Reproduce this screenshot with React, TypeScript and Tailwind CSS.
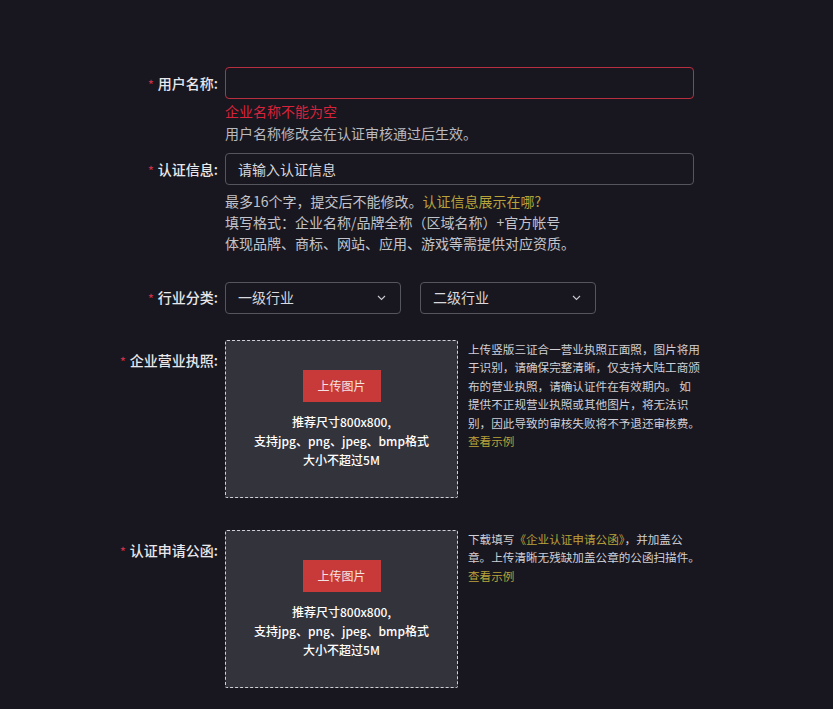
import React from "react";

const font = { fontFamily: '"Noto Sans CJK SC", "Noto Sans", sans-serif' };

function Label({ text, className = "" }: { text: string; className?: string }) {
  return (
    <div className={`w-[218px] shrink-0 text-right text-[14px] font-medium text-[#e8e8ec] ${className}`}>
      <span className="mr-[4px] text-[12px] text-[#c8304a]">*</span>
      {text}:
    </div>
  );
}

function Chevron() {
  return (
    <svg width="9" height="6" viewBox="0 0 9 6" fill="none" className="text-[#c9c9d0]">
      <path d="M1 1l3.5 3.5L8 1" stroke="currentColor" strokeWidth="1.1" />
    </svg>
  );
}

function Select({ text }: { text: string }) {
  return (
    <div className="flex h-[32px] w-[176px] items-center justify-between rounded-[4px] border border-[#55555e] pl-[12px] pr-[14px] text-[14px] text-[#d8d8de]">
      <span>{text}</span>
      <Chevron />
    </div>
  );
}

function UploadBox() {
  return (
    <div className="flex h-[158px] w-[233px] shrink-0 flex-col items-center rounded-[2px] border border-dashed border-[#d0d0d6] bg-[#33333b] pt-[29px]">
      <div className="flex h-[32px] w-[78px] items-center justify-center bg-[#c83a3a] text-[12px] text-[#f3e3e3]">
        上传图片
      </div>
      <div className="mt-[10px] text-center text-[12px] font-medium leading-[19px] text-white">
        <div>推荐尺寸800x800,</div>
        <div>支持jpg、png、jpeg、bmp格式</div>
        <div>大小不超过5M</div>
      </div>
    </div>
  );
}

export default function App() {
  return (
    <div className="min-h-[709px] w-full bg-[#18171f] pt-[67px]" style={font}>
      {/* 用户名称 */}
      <div className="flex items-start">
        <Label text="用户名称" className="leading-[32px]" />
        <div className="ml-[7px] w-[469px]">
          <div className="h-[32px] rounded-[4px] border border-[#b8303f] bg-[#18171f]" />
          <div className="mt-[1px] text-[14px] leading-[22px] text-[#d8233c]">企业名称不能为空</div>
          <div className="text-[14px] leading-[22px] text-[#b9b9c0]">用户名称修改会在认证审核通过后生效。</div>
        </div>
      </div>

      {/* 认证信息 */}
      <div className="mt-[9px] flex items-start">
        <Label text="认证信息" className="leading-[32px]" />
        <div className="ml-[7px] w-[469px]">
          <div className="flex h-[32px] items-center rounded-[4px] border border-[#55555e] px-[12px] text-[14px] text-[#d8d8de]">
            请输入认证信息
          </div>
          <div className="mt-[6px] text-[14px] leading-[21px] text-[#c3c3ca]">
            <div>
              最多16个字，提交后不能修改。<span className="text-[#b9a23a]">认证信息展示在哪?</span>
            </div>
            <div>填写格式：企业名称/品牌全称（区域名称）+官方帐号</div>
            <div>体现品牌、商标、网站、应用、游戏等需提供对应资质。</div>
          </div>
        </div>
      </div>

      {/* 行业分类 */}
      <div className="mt-[27px] flex items-center">
        <Label text="行业分类" className="leading-[32px]" />
        <div className="ml-[7px] flex gap-[19px]">
          <Select text="一级行业" />
          <Select text="二级行业" />
        </div>
      </div>

      {/* 企业营业执照 */}
      <div className="mt-[26px] flex items-start">
        <Label text="企业营业执照" className="mt-[4px] leading-[32px]" />
        <div className="ml-[7px] flex items-start">
          <UploadBox />
          <div className="ml-[10px] w-[250px] text-[11.6px] leading-[18.4px] text-[#cfcfd5]">
            <div>上传竖版三证合一营业执照正面照，图片将用</div>
            <div>于识别，请确保完整清晰，仅支持大陆工商颁</div>
            <div>布的营业执照，请确认证件在有效期内。 如</div>
            <div>提供不正规营业执照或其他图片，将无法识</div>
            <div>别，因此导致的审核失败将不予退还审核费。</div>
            <div className="text-[#b9a23a]">查看示例</div>
          </div>
        </div>
      </div>

      {/* 认证申请公函 */}
      <div className="mt-[32px] flex items-start">
        <Label text="认证申请公函" className="mt-[4px] leading-[32px]" />
        <div className="ml-[7px] flex items-start">
          <UploadBox />
          <div className="ml-[10px] w-[250px] text-[11.6px] leading-[18.4px] text-[#cfcfd5]">
            <div>
              下载填写<span className="text-[#b9a23a]">《企业认证申请公函》</span>，并加盖公
            </div>
            <div>章。上传清晰无残缺加盖公章的公函扫描件。</div>
            <div className="text-[#b9a23a]">查看示例</div>
          </div>
        </div>
      </div>
    </div>
  );
}
